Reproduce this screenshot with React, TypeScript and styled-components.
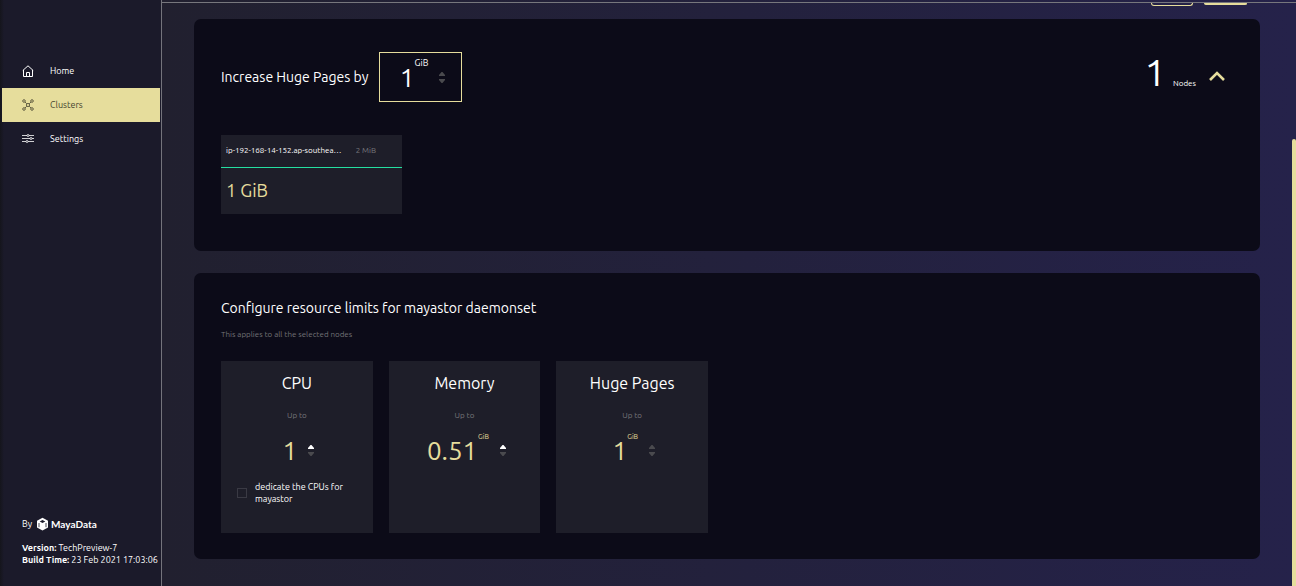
import React from "react";
import styled, { createGlobalStyle } from "styled-components";

const gold = "#e6dd9c";

const GlobalStyle = createGlobalStyle`
  * { box-sizing: border-box; }
  html, body, #root { height: 100%; }
  body {
    margin: 0;
    overflow: hidden;
    color: #fff;
    background: #1b1a2a;
    font-family: Ubuntu, "Noto Sans", sans-serif;
  }
  button, input { font-family: inherit; }
  h2, h3, p { margin: 0; font-weight: 400; }
`;

const Page = styled.div`
  display: flex;
  height: 100%;
`;

const Sidebar = styled.aside`
  flex: 0 0 162px;
  display: flex;
  flex-direction: column;
  justify-content: space-between;
  padding: 54px 0 20px 2px;
  background: linear-gradient(90deg, #15151c, #1b1a2a 4px);
  border-right: 1px solid #74747c;
`;

const Nav = styled.nav`
  display: flex;
  flex-direction: column;
  padding-right: 1px;
`;

const NavLink = styled.a<{ $active?: boolean }>`
  display: flex;
  align-items: center;
  gap: 16px;
  height: 34px;
  padding-left: 20px;
  font-size: 9px;
  text-decoration: none;
  color: ${(p) => (p.$active ? "#45432f" : "#fff")};
  background: ${(p) => (p.$active ? gold : "transparent")};
`;

const NavIcon = styled.svg`
  width: 12px;
  height: 12px;
  fill: none;
  stroke: currentColor;
`;

const SidebarFooter = styled.footer`
  padding-left: 20px;
  font-size: 9px;
  line-height: 12px;
  white-space: nowrap;
`;

const Brand = styled.div`
  display: flex;
  align-items: center;
  gap: 4px;
  margin-bottom: 11px;
`;

const BrandName = styled.span`
  font-family: Lato, sans-serif;
  font-size: 10px;
  font-weight: 700;
  margin-left: -2px;
`;

const Main = styled.main`
  flex: 1;
  min-width: 0;
  position: relative;
  display: flex;
  flex-direction: column;
  gap: 22px;
  padding: 0 36px 0 32px;
  background: linear-gradient(90deg, #21202f, #25224a);
`;

const TopBar = styled.header`
  display: flex;
  justify-content: flex-end;
  gap: 11px;
  height: 6px;
  margin: 0 -36px -9px -32px;
  padding-right: 49px;
  background: linear-gradient(#77777d, #77777d) 0 2px / 100% 1px no-repeat;
`;

const ActionEdge = styled.div<{ $filled?: boolean }>`
  width: ${(p) => (p.$filled ? 43 : 42)}px;
  height: ${(p) => (p.$filled ? 2 : 3)}px;
  margin-top: 3px;
  border: 1px solid ${gold};
  border-top: 0;
  border-radius: 0 0 3px 3px;
  background: ${(p) => (p.$filled ? gold : "transparent")};
`;

const Panel = styled.section`
  padding: 25px 27px 26px;
  border-radius: 7px;
  background: #0c0b18;
`;

const HugePagesPanel = styled(Panel)`
  min-height: 232px;
  padding-top: 33px;
`;

const PanelHeader = styled.div`
  display: flex;
  justify-content: space-between;
  height: 50px;
`;

const IncreaseField = styled.div`
  display: flex;
  align-items: center;
  gap: 11px;
`;

const Title = styled.h2`
  font-size: 14px;
  line-height: 20px;
  white-space: nowrap;
`;

const ValueBox = styled.div`
  display: flex;
  align-items: center;
  justify-content: center;
  width: 83px;
  height: 50px;
  border: 1px solid ${gold};
`;

const ValueRow = styled.div`
  display: flex;
  justify-content: center;
  align-items: center;
  height: 36px;
  padding-left: 4px;
`;

const NumberInput = styled.input<{ $chars: number; $gold?: boolean }>`
  width: ${(p) => (p.$chars > 1 ? 52 : 15)}px;
  height: 36px;
  padding: 0;
  border: 0;
  outline: 0;
  background: transparent;
  text-align: center;
  font-size: 26px;
  color: ${(p) => (p.$gold ? gold : "#fff")};
`;

const Unit = styled.span<{ $gold?: boolean }>`
  align-self: flex-start;
  font-size: ${(p) => (p.$gold ? 7 : 9)}px;
  line-height: 8px;
  color: ${(p) => (p.$gold ? gold : "#fff")};
`;

const Stepper = styled.div`
  display: flex;
  flex-direction: column;
  gap: 3px;
  margin-left: 10px;
`;

const StepButton = styled.button`
  display: flex;
  justify-content: center;
  width: 8px;
  height: 4px;
  padding: 0;
  border: 0;
  background: transparent;
  color: #4a4a4e;
  &:enabled { color: #fff; }
`;

const NodeSummary = styled.div`
  display: flex;
  align-items: center;
  gap: 12px;
  padding-right: 7px;
`;

const NodeTotal = styled.div`
  display: flex;
  align-items: baseline;
  align-self: flex-start;
  gap: 7px;
  font-size: 8px;
  line-height: 40px;
`;

const NodeCount = styled.span`
  font-size: 38px;
`;

const CollapseButton = styled.button`
  display: flex;
  padding: 0;
  border: 0;
  background: transparent;
  color: ${gold};
`;

const NodeCard = styled.article`
  width: 181px;
  margin-top: 33px;
  background: #1e1e29;
`;

const NodeHead = styled.div`
  display: flex;
  align-items: center;
  justify-content: space-between;
  height: 33px;
  padding: 0 26px 2px 5px;
  border-bottom: 1px solid #25dfa1;
  font-size: 8px;
  white-space: nowrap;
`;

const PageSize = styled.span`
  color: #77777b;
`;

const NodeValue = styled.p`
  padding: 0 5px 2px;
  font-size: 18px;
  line-height: 44px;
  color: ${gold};
`;

const Note = styled.p`
  margin-top: 11px;
  font-size: 8px;
  line-height: 12px;
  color: #737377;
`;

const LimitGrid = styled.div`
  display: grid;
  grid-template-columns: repeat(3, 1fr);
  gap: 16px;
  max-width: 487px;
  margin-top: 20px;
`;

const LimitCard = styled.article`
  min-height: 172px;
  padding: 12px 16px;
  background: #1e1e29;
`;

const LimitName = styled.h3`
  font-size: 16px;
  line-height: 20px;
  text-align: center;
`;

const UpTo = styled.p`
  margin: 17px 0 10px;
  font-size: 8px;
  line-height: 12px;
  text-align: center;
  color: #77777b;
`;

const CheckLabel = styled.label`
  display: flex;
  align-items: center;
  gap: 8px;
  margin-top: 13px;
  font-size: 9px;
  line-height: 12px;
`;

const Checkbox = styled.input`
  appearance: none;
  flex: none;
  width: 10px;
  height: 10px;
  margin: 0;
  border: 1px solid #3a3a44;
`;

const ScrollThumb = styled.div`
  position: absolute;
  top: 139px;
  right: 0;
  bottom: 0;
  width: 4px;
  border-radius: 2px 2px 0 0;
  background: ${gold};
`;

function Steps({ name, up }: { name: string; up?: boolean }) {
  return (
    <Stepper>
      <StepButton aria-label={`Increase ${name}`} disabled={!up}>
        <svg width="6" height="4"><path d="M0 4V3L2.500 0h1L6 3v1z" fill="currentColor" /></svg>
      </StepButton>
      <StepButton aria-label={`Decrease ${name}`} disabled>
        <svg width="6" height="4"><path d="M0 0v1l2.500 3h1L6 1V0z" fill="currentColor" /></svg>
      </StepButton>
    </Stepper>
  );
}

function Limit({ name, value, unit, up, children }: {
  name: string; value: string; unit?: string; up?: boolean; children?: React.ReactNode;
}) {
  return (
    <LimitCard>
      <LimitName>{name}</LimitName>
      <UpTo>Up to</UpTo>
      <ValueRow>
        <NumberInput $gold $chars={value.length} aria-label={name} defaultValue={value} />
        {unit && <Unit $gold>{unit}</Unit>}
        <Steps name={name} up={up} />
      </ValueRow>
      {children}
    </LimitCard>
  );
}

export default function App() {
  return (
    <Page>
      <GlobalStyle />
      <Sidebar>
        <Nav>
          <NavLink href="#home">
            <NavIcon viewBox="0 0 12 12"><path d="M.8 5.500L6 .8l5.200 4.700M1.500 5v6.500h9V5M4.500 11.500v-4h3v4" /></NavIcon>
            Home
          </NavLink>
          <NavLink href="#clusters" $active>
            <NavIcon viewBox="0 0 12 12" strokeWidth="0.8">
              <circle cx="2" cy="2" r="1.300" /><circle cx="10" cy="2" r="1.300" />
              <circle cx="2" cy="10" r="1.300" /><circle cx="10" cy="10" r="1.300" />
              <circle cx="6" cy="6" r="1.600" />
              <path d="M3 3l1.800 1.800M9 3L7.200 4.800M3 9l1.800-1.800M9 9L7.200 7.200" />
            </NavIcon>
            Clusters
          </NavLink>
          <NavLink href="#settings">
            <NavIcon viewBox="0 0 12 12" strokeWidth="0.8">
              <path d="M0 2.500h5M7 2.500h5M0 5.500h8M10 5.500h2M0 8.500h4M6 8.500h6" />
              <circle cx="6" cy="2.500" r="1" /><circle cx="9" cy="5.500" r="1" /><circle cx="5" cy="8.500" r="1" />
            </NavIcon>
            Settings
          </NavLink>
        </Nav>
        <SidebarFooter>
          <Brand>
            <span>By</span>
            <svg width="13" height="14" viewBox="0 0 13 14">
              <path d="M6.500.8l5.500 3v6.600l-5.500 3-5.500-3V3.800z" fill="#fff" />
              <path d="M3.700 4.600l2.800-1.500 2.800 1.500-2.800 1.400z" fill="#1b1a2a" />
              <path d="M3 6v4.200M10 6v4.200" stroke="#1b1a2a" strokeWidth="0.8" />
            </svg>
            <BrandName>MayaData</BrandName>
          </Brand>
          <div><b>Version:</b> TechPreview-7</div>
          <div><b>Build Time:</b> 23 Feb 2021 17:03:06</div>
        </SidebarFooter>
      </Sidebar>
      <Main>
        <TopBar><ActionEdge /><ActionEdge $filled /></TopBar>
        <HugePagesPanel>
          <PanelHeader>
            <IncreaseField>
              <Title as="label" htmlFor="increase">Increase Huge Pages by</Title>
              <ValueBox>
                <ValueRow>
                  <NumberInput id="increase" $chars={1} defaultValue="1" />
                  <Unit>GiB</Unit>
                  <Steps name="huge pages increment" />
                </ValueRow>
              </ValueBox>
            </IncreaseField>
            <NodeSummary>
              <NodeTotal>
                <NodeCount>1</NodeCount>
                <span>Nodes</span>
              </NodeTotal>
              <CollapseButton aria-label="Collapse nodes">
                <svg width="18" height="12" viewBox="0 0 18 12" fill="none" stroke="currentColor" strokeWidth="2.600"><path d="M2 9l7-7 7 7" /></svg>
              </CollapseButton>
            </NodeSummary>
          </PanelHeader>
          <NodeCard>
            <NodeHead>
              <span>ip-192-168-14-152.ap-southea…</span>
              <PageSize>2 MiB</PageSize>
            </NodeHead>
            <NodeValue>1 GiB</NodeValue>
          </NodeCard>
        </HugePagesPanel>
        <Panel>
          <Title>Configure resource limits for mayastor daemonset</Title>
          <Note>This applies to all the selected nodes</Note>
          <LimitGrid>
            <Limit name="CPU" value="1" up>
              <CheckLabel><Checkbox type="checkbox" />dedicate the CPUs for mayastor</CheckLabel>
            </Limit>
            <Limit name="Memory" value="0.51" unit="GiB" up />
            <Limit name="Huge Pages" value="1" unit="GiB" />
          </LimitGrid>
        </Panel>
        <ScrollThumb />
      </Main>
    </Page>
  );
}
